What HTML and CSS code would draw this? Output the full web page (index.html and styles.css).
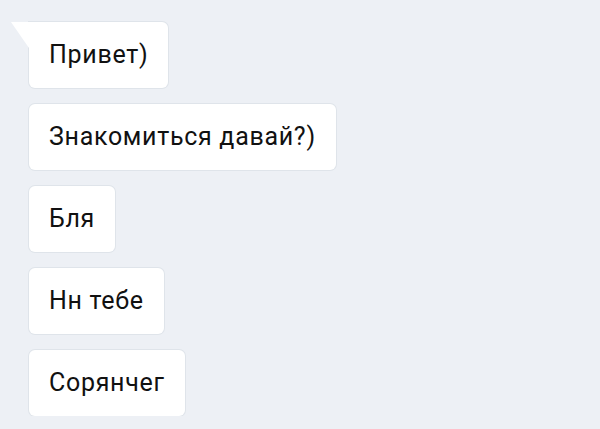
FILE: index.html
```html
<!DOCTYPE html>
<html lang="ru">
<head>
    <meta charset="UTF-8">
    <meta name="viewport" content="width=device-width, initial-scale=1.0">
    <title>Сообщения</title>
    <link rel="stylesheet" href="styles.css">
</head>
<body>
    <div class="chat">
        <div class="msg first">Привет)</div>
        <div class="msg">Знакомиться давай?)</div>
        <div class="msg">Бля</div>
        <div class="msg">Нн тебе</div>
        <div class="msg">Сорянчег</div>
    </div>
</body>
</html>
```

FILE: styles.css
```css
body {
    margin: 0;
    background-color: #edf0f5;
    font-family: Roboto, "Noto Sans", Arial, sans-serif;
}
.chat {
    display: flex;
    flex-direction: column;
    align-items: flex-start;
    gap: 16px;
    padding: 22px 0 0 29px;
}
.msg {
    position: relative;
    background: white;
    color: #111;
    font-size: 25px;
    line-height: 28px;
    letter-spacing: 0.7px;
    padding: 19px 20px 19px 20px;
    border-radius: 6px;
    box-shadow: 0 0 0 1px #dfe4ea;
}
.msg.first {
    border-top-left-radius: 0;
}
.msg.first::before {
    content: "";
    position: absolute;
    left: -18px;
    top: 0;
    width: 18px;
    height: 26px;
    background: white;
    clip-path: polygon(0 0, 100% 0, 100% 100%);
}
```
